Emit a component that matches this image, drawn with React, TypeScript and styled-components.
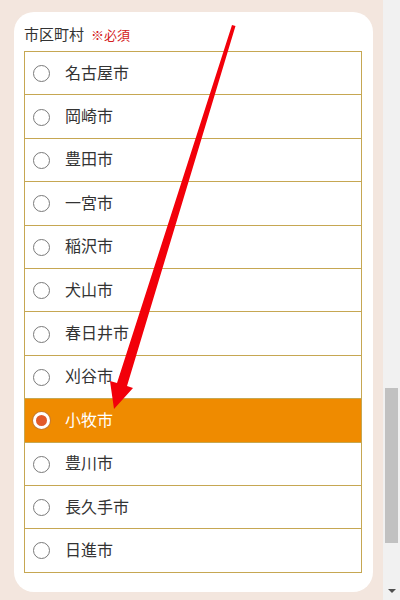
import React, { useState } from 'react';
import styled, { createGlobalStyle } from 'styled-components';

const cities = [
  '名古屋市',
  '岡崎市',
  '豊田市',
  '一宮市',
  '稲沢市',
  '犬山市',
  '春日井市',
  '刈谷市',
  '小牧市',
  '豊川市',
  '長久手市',
  '日進市',
];

const GlobalStyle = createGlobalStyle`
  html, body {
    margin: 0;
    padding: 0;
    overflow: hidden;
  }
  body {
    font-family: "Noto Sans CJK JP", "Noto Sans", sans-serif;
    background: #f3e6de;
  }
`;

function App() {
  const [selected, setSelected] = useState<string>('小牧市');

  return (
    <>
      <GlobalStyle />
      <Page>
        <Main>
          <Card>
            <Label>
              市区町村<Required>※必須</Required>
            </Label>
            <List>
              {cities.map((city) => (
                <Row
                  key={city}
                  $active={city === selected}
                  onClick={() => setSelected(city)}
                >
                  <Radio $active={city === selected} />
                  <span>{city}</span>
                </Row>
              ))}
            </List>
          </Card>
        </Main>
        <ScrollBar>
          <Thumb />
          <DownArrow />
        </ScrollBar>
        <Arrow width="400" height="600" viewBox="0 0 400 600">
          {/* 赤い矢印 */}
          <polygon
            fill="#f2000a"
            points="232,25 235.5,26 127,386 133,388 114,409 110,381 117,383"
          />
        </Arrow>
      </Page>
    </>
  );
}

export default App;

const Page = styled.div`
  position: relative;
  width: 400px;
  height: 600px;
  display: flex;
  overflow: hidden;
`;

const Main = styled.div`
  flex: 1;
  padding: 12px 10px 0 14px;
`;

const Card = styled.div`
  background: #ffffff;
  border-radius: 20px;
  height: 580px;
  box-sizing: border-box;
  padding: 11px 11px 0 10px;
`;

const Label = styled.div`
  font-size: 15px;
  line-height: 22px;
  color: #333333;
  margin-bottom: 5px;
`;

const Required = styled.span`
  font-size: 13px;
  color: #d42020;
  margin-left: 7px;
`;

const List = styled.div`
  border: 1px solid #c6a752;
  border-bottom: none;
`;

type activeProps = {
  $active: boolean;
};

const Row = styled.div<activeProps>`
  height: 43.4px;
  box-sizing: border-box;
  display: flex;
  align-items: center;
  border-bottom: 1px solid #c6a752;
  background: ${(props) => (props.$active ? '#ef8b00' : '#ffffff')};
  color: ${(props) => (props.$active ? '#ffffff' : '#333333')};
  font-size: 16px;
  padding: 0 0 3px 8px;
  cursor: pointer;
`;

const Radio = styled.span<activeProps>`
  width: 17px;
  height: 17px;
  border-radius: 50%;
  box-sizing: border-box;
  border: ${(props) =>
    props.$active ? '3.5px solid #ffffff' : '1px solid #7a7a7a'};
  background: ${(props) => (props.$active ? '#e25a2a' : '#ffffff')};
  box-shadow: ${(props) => (props.$active ? '0 0 0 1px #c77a30' : 'none')};
  margin: 4px 15px 0 0;
  flex-shrink: 0;
`;

const ScrollBar = styled.div`
  width: 17px;
  background: #f1f1f1;
  display: flex;
  flex-direction: column;
  align-items: center;
  padding-top: 388px;
  box-sizing: border-box;
`;

const Thumb = styled.div`
  width: 13px;
  height: 155px;
  background: #c1c1c1;
`;

const DownArrow = styled.div`
  margin-top: auto;
  margin-bottom: 7px;
  width: 0;
  height: 0;
  border-left: 4px solid transparent;
  border-right: 4px solid transparent;
  border-top: 4px solid #505050;
`;

const Arrow = styled.svg`
  position: absolute;
  left: 0;
  top: 0;
  pointer-events: none;
`;
